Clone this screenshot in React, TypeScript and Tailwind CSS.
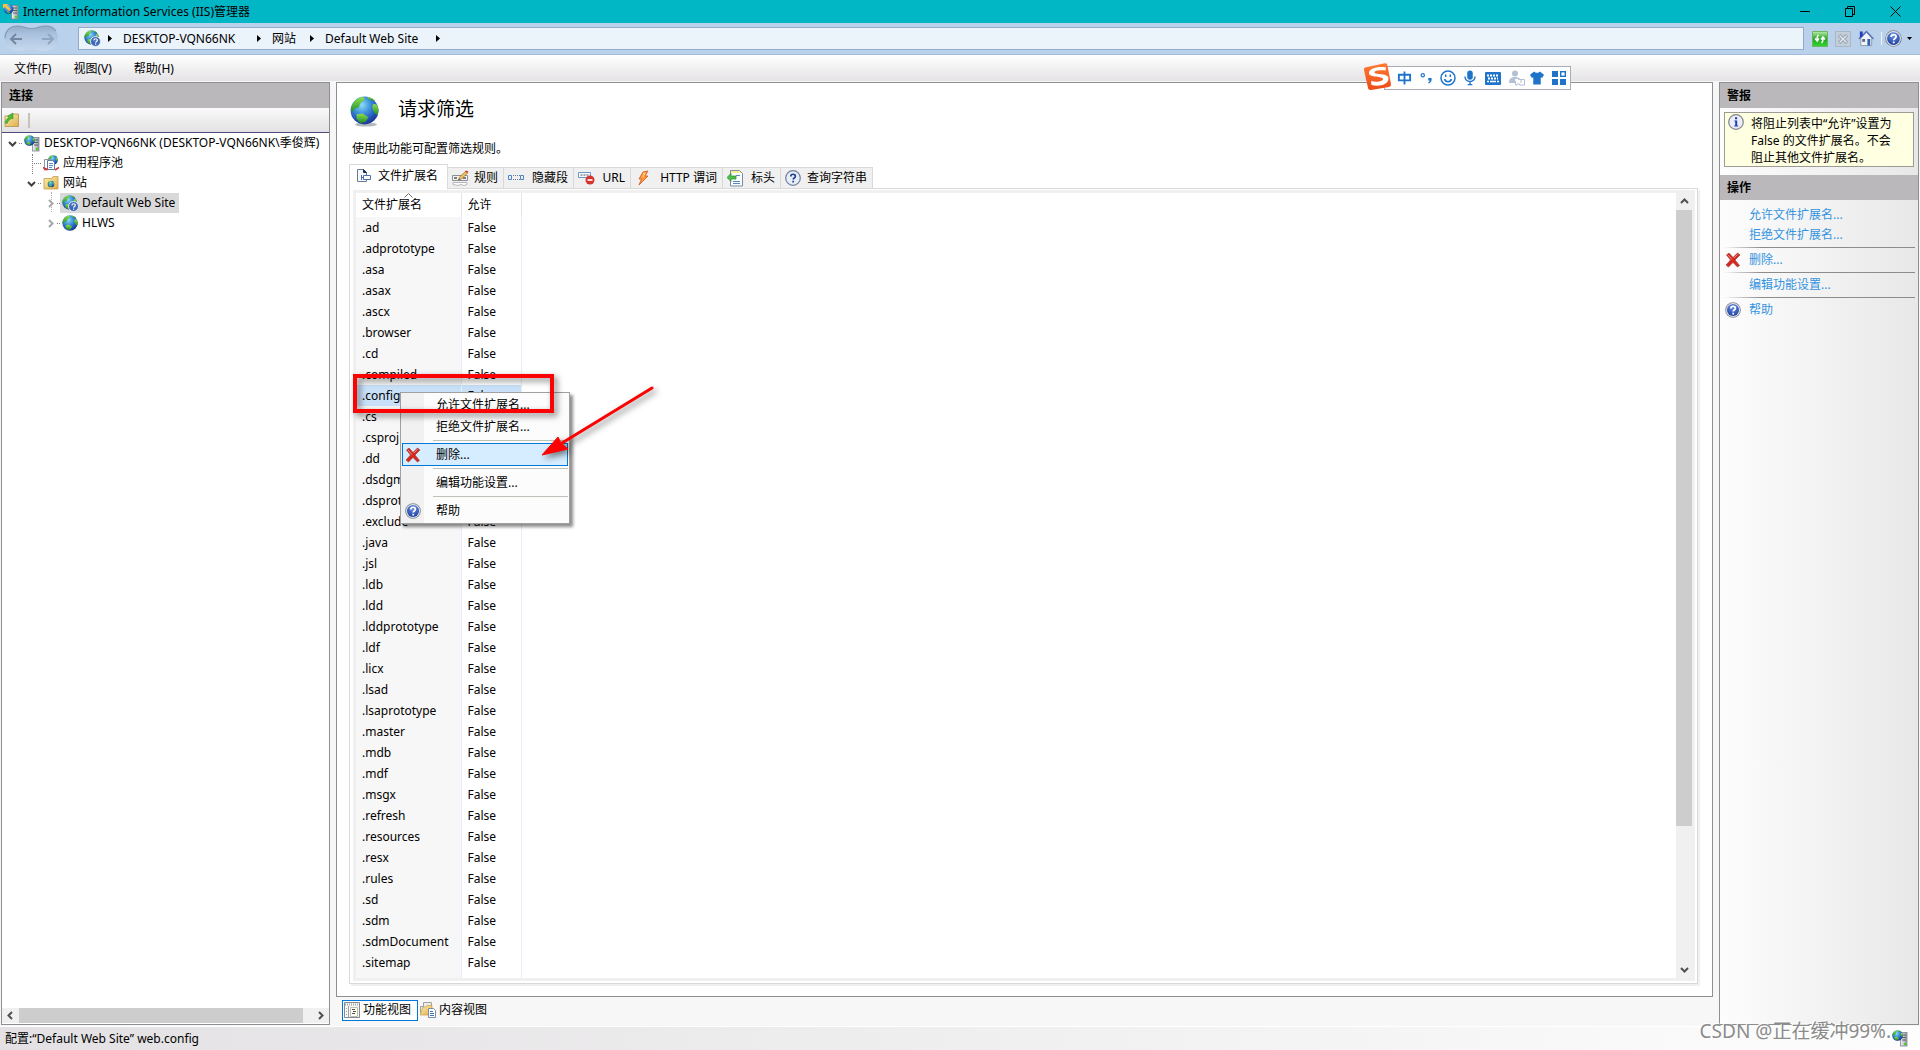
import React from "react";

const extensions = [
  ".ad", ".adprototype", ".asa", ".asax", ".ascx", ".browser", ".cd", ".compiled", ".config",
  ".cs", ".csproj", ".dd", ".dsdgm", ".dsprototype", ".exclude", ".java", ".jsl", ".ldb",
  ".ldd", ".lddprototype", ".ldf", ".licx", ".lsad", ".lsaprototype", ".master", ".mdb", ".mdf",
  ".msgx", ".refresh", ".resources", ".resx", ".rules", ".sd", ".sdm", ".sdmDocument", ".sitemap",
];

/* ---------- shared gradients ---------- */

function Gradients() {
  return (
    <svg className="absolute h-0 w-0" aria-hidden="true">
      <defs>
        <radialGradient id="sea" cx="0.4" cy="0.3" r="0.75">
          <stop offset="0" stopColor="#8fdcf5" />
          <stop offset="0.4" stopColor="#3f93dc" />
          <stop offset="0.8" stopColor="#1f49b0" />
          <stop offset="1" stopColor="#1a2f86" />
        </radialGradient>
        <linearGradient id="land" x1="0" y1="0" x2="0" y2="1">
          <stop offset="0" stopColor="#8ee04a" />
          <stop offset="1" stopColor="#1f8a2c" />
        </linearGradient>
        <linearGradient id="folder" x1="0" y1="0" x2="1" y2="1">
          <stop offset="0" stopColor="#fdf0b0" />
          <stop offset="1" stopColor="#e0ad4a" />
        </linearGradient>
        <linearGradient id="steel" x1="0" y1="0" x2="1" y2="0">
          <stop offset="0" stopColor="#f4f6f7" />
          <stop offset="1" stopColor="#8e979c" />
        </linearGradient>
        <radialGradient id="helpBlue" cx="0.5" cy="0.25" r="0.8">
          <stop offset="0" stopColor="#6f95e6" />
          <stop offset="1" stopColor="#173a9c" />
        </radialGradient>
        <linearGradient id="greenKey" x1="0" y1="0" x2="0" y2="1">
          <stop offset="0" stopColor="#b8ecab" />
          <stop offset="0.5" stopColor="#22a522" />
          <stop offset="1" stopColor="#35d72f" />
        </linearGradient>
        <linearGradient id="orange" x1="0" y1="0" x2="0" y2="1">
          <stop offset="0" stopColor="#ff7a33" />
          <stop offset="1" stopColor="#ee4a17" />
        </linearGradient>
        <linearGradient id="navPill" x1="0" y1="0" x2="0" y2="1">
          <stop offset="0" stopColor="#93abc8" />
          <stop offset="0.3" stopColor="#a9c0dc" />
          <stop offset="1" stopColor="#c6d9ee" />
        </linearGradient>
      </defs>
    </svg>
  );
}

/* ---------- icons ---------- */

function GlobeArt({ x = 0, y = 0, size = 16 }: { x?: number; y?: number; size?: number }) {
  return (
    <svg x={x} y={y} width={size} height={size} viewBox="0 0 30 30">
      <circle cx="15" cy="15" r="14.4" fill="url(#sea)" />
      <path d="M3 8 C6 3 10 1 14 1 L15 4 L11 7 L9 12 L5 13 L2 17 C0 14 1 11 3 8Z" fill="url(#land)" />
      <path d="M18 1 C21 1 24 3 26 5 L23 5 L20 4Z" fill="url(#land)" />
      <path d="M24 8 L28 9 C30 13 30 17 28 20 L25 17 L23 12Z" fill="url(#land)" />
      <path d="M7 19 L13 18 L19 22 L16 27 L11 28 C8 26 6 23 7 19Z" fill="url(#land)" />
    </svg>
  );
}

function Globe({ size = 16 }: { size?: number }) {
  return (
    <svg width={size} height={size} viewBox="0 0 16 16" className="shrink-0" aria-hidden="true">
      <GlobeArt />
    </svg>
  );
}

function SiteHelp() {
  return (
    <svg width="17" height="17" viewBox="0 0 17 17" className="shrink-0" aria-hidden="true">
      <GlobeArt size={15} />
      <circle cx="11.5" cy="11.5" r="5" fill="#3f68b8" stroke="#e6edf8" strokeWidth="1" />
      <path d="M9.9 10.4c0-2.2 3.4-2.2 3.4-.1 0 1.3-1.6 1.2-1.6 2.4M11.6 13.6v1.2" fill="none" stroke="#fff" strokeWidth="1.2" />
    </svg>
  );
}

function HelpBall({ size = 16 }: { size?: number }) {
  return (
    <svg width={size} height={size} viewBox="0 0 16 16" className="shrink-0" aria-hidden="true">
      <circle cx="8" cy="8" r="7.8" fill="#7d8290" />
      <circle cx="8" cy="8" r="7" fill="#dfe3ea" />
      <circle cx="8" cy="8" r="6" fill="url(#helpBlue)" />
      <path d="M5.8 6.5c0-3 4.6-2.9 4.6-.2 0 1.8-2.2 1.6-2.2 3.3M8.2 10.8v1.7" fill="none" stroke="#fff" strokeWidth="1.7" />
    </svg>
  );
}

function QueryBall() {
  return (
    <svg width="16" height="16" viewBox="0 0 16 16" className="shrink-0" aria-hidden="true">
      <circle cx="8" cy="8" r="7.3" fill="#e8eef8" stroke="#6f7f9c" strokeWidth="1.2" />
      <path d="M5.8 6.5c0-3 4.6-2.9 4.6-.2 0 1.8-2.2 1.6-2.2 3.3M8.2 10.8v1.7" fill="none" stroke="#1f3f94" strokeWidth="1.7" />
    </svg>
  );
}

function InfoBall() {
  return (
    <svg width="16" height="16" viewBox="0 0 16 16" className="shrink-0" aria-hidden="true">
      <circle cx="8" cy="8" r="7.3" fill="#eceef3" stroke="#80848e" strokeWidth="1.2" />
      <path d="M7 3.2h2.2v2H7zM6.3 6.4h2.9v5.2h1v1H6.2v-1h1V7.4h-.9z" fill="#1c3fc0" />
    </svg>
  );
}

function Server({ arrow = false }: { arrow?: boolean }) {
  return (
    <svg width="16" height="17" viewBox="0 0 16 17" className="shrink-0" aria-hidden="true">
      <rect x="8.5" y="2.5" width="6.5" height="13.5" fill="url(#steel)" stroke="#7f878c" strokeWidth="0.8" />
      <path d="M10 5h4M10 7.5h4M10 10h4" stroke="#4c5459" strokeWidth="0.9" />
      <rect x="12" y="13" width="2" height="2" fill="#3fd41f" />
      {arrow ? (
        <g>
          <circle cx="5.5" cy="6" r="5" fill="url(#sea)" />
          <path d="M0 1l5 0-1.5 1.5L8 6.5 6 8 2 4 0 5.5z" fill="#ffc02e" />
          <path d="M3 8l4 1-1 2z" fill="url(#land)" />
        </g>
      ) : (
        <GlobeArt size={11} />
      )}
    </svg>
  );
}

function AppPool() {
  return (
    <svg width="16" height="16" viewBox="0 0 16 16" className="shrink-0" aria-hidden="true">
      <GlobeArt x={5} y={0} size={10} />
      <path d="M1.5 4.5h6v9h-6z" fill="#fff" stroke="#8c97a3" />
      <path d="M4.5 5.5h5l2 2v7h-7z" fill="#fff" stroke="#5d7da4" />
      <path d="M6 8.5h4M6 10.5h4M6 12.5h3" stroke="#5d8cc4" />
      <path d="M0 12.5l3 1.5M16 12.5L12 15M1 14.5h4" stroke="#d33a33" strokeWidth="1.6" />
    </svg>
  );
}

function SitesFolder() {
  return (
    <svg width="16" height="16" viewBox="0 0 16 16" className="shrink-0" aria-hidden="true">
      <path d="M1 3.5h8l1-2h5v12.5H1z" fill="url(#folder)" stroke="#c79d45" strokeWidth="0.8" />
      <GlobeArt x={4.5} y={5.5} size={7} />
    </svg>
  );
}

function OpenFolder() {
  return (
    <svg width="16" height="16" viewBox="0 0 16 16" className="shrink-0" aria-hidden="true">
      <path d="M1 4h7l1-2h5.5v12.5H1z" fill="url(#folder)" stroke="#b8924a" strokeWidth="0.8" />
      <path d="M1 11c1-3 2-4.500 4-5.500L3.500 4 9 1v6L7.500 6.500C5.500 7.500 4 9 3 11.500z" fill="#4cbc35" stroke="#2a8a22" strokeWidth="0.5" />
    </svg>
  );
}

function RedCross() {
  return (
    <svg width="16" height="16" viewBox="0 0 16 16" className="shrink-0" aria-hidden="true">
      <path d="M1.5 3L4 1l4 4.500L12.500 1 15 3l-5 5 4.500 5.500L12.500 15 8 10.500 3.500 15 1 13l4.500-5z" fill="#d9261c" stroke="#9c4a46" strokeWidth="0.7" />
      <path d="M3 3l4 4.500M12.500 2.500L9 6" stroke="#f38b84" strokeWidth="1" />
    </svg>
  );
}

function TabExtIcon() {
  return (
    <svg width="16" height="16" viewBox="0 0 16 16" className="shrink-0" aria-hidden="true">
      <path d="M1.5 1.5h6l3 3v9h-9z" fill="#f6f8fb" stroke="#6d7a8d" />
      <path d="M7.5 1.5v3h3z" fill="#1d2f66" stroke="#1d2f66" />
      <path d="M5.5 7v5M5.5 9.5h2M7.5 7.5h7v4h-7z" fill="#fff" stroke="#4b6fae" />
    </svg>
  );
}

function TabRuleIcon() {
  return (
    <svg width="18" height="16" viewBox="0 0 18 16" className="shrink-0" aria-hidden="true">
      <path d="M.5 5.5h15v5H.5z" fill="#f1f2f4" stroke="#888e96" />
      <path d="M1 12.5h14v2l-3 1-3-1-3 1-5-1z" fill="#fff" stroke="#b3b7bd" />
      <path d="M2 8h3M11 8h3" stroke="#555" strokeWidth="1.5" />
      <path d="M6.500 10l1-3 6-5.500 2 1.500-6 6z" fill="#eec25f" stroke="#9a6a2c" strokeWidth="0.7" />
      <path d="M13 1.500L14 .5l2.500 1-1 1.500z" fill="#d23b32" />
      <path d="M6.500 10l.5-1.500 1 1z" fill="#333" />
    </svg>
  );
}

function TabSegIcon() {
  return (
    <svg width="16" height="16" viewBox="0 0 16 16" className="shrink-0" aria-hidden="true">
      <path d="M.5 5.5h3v4h-3zM12.500 5.500h3v4h-3z" fill="#e8f1fb" stroke="#4f85c2" />
      <path d="M5 5.500h7M5 9.500h7" stroke="#6b7788" strokeDasharray="1 1" />
    </svg>
  );
}

function TabUrlIcon() {
  return (
    <svg width="17" height="16" viewBox="0 0 17 16" className="shrink-0" aria-hidden="true">
      <path d="M.5 2.500h12v5H.5z" fill="#f5f9fd" stroke="#6a9acb" />
      <path d="M2.500 5h8" stroke="#555" strokeDasharray="2 1" />
      <circle cx="12" cy="10" r="4.500" fill="#d3342e" />
      <path d="M9.500 10h5" stroke="#fff" strokeWidth="1.600" />
    </svg>
  );
}

function TabVerbIcon() {
  return (
    <svg width="16" height="16" viewBox="0 0 16 16" className="shrink-0" aria-hidden="true">
      <path d="M8 2l5-1-3 5h3L4 15l2.500-6H4z" fill="#fb9a3c" stroke="#d9531e" strokeWidth="0.8" />
      <path d="M8 4l2-1-2 4" fill="none" stroke="#ffe48a" />
    </svg>
  );
}

function TabHeaderIcon() {
  return (
    <svg width="16" height="17" viewBox="0 0 16 17" className="shrink-0" aria-hidden="true">
      <path d="M3.500.5h9l3 3v12.500h-12z" fill="#fbfcfd" stroke="#7f8d9c" />
      <path d="M4 1h8l2 2H4z" fill="#f6f08a" />
      <path d="M6 11.500h7M6 13.500h7M9 5.500h4" stroke="#5b86bd" />
      <path d="M0 7.500l4-4v2.500h5v3H4v2.500z" fill="#4fc04a" stroke="#23872a" strokeWidth="0.7" />
    </svg>
  );
}

function FeaturesViewIcon() {
  return (
    <svg width="16" height="16" viewBox="0 0 16 16" className="shrink-0" aria-hidden="true">
      <path d="M.5.5h15v15H.5z" fill="#f7f7f5" stroke="#85888c" />
      <path d="M1 2.500h14" stroke="#a4a7ab" strokeWidth="2" strokeDasharray="1 1" />
      <path d="M4.500 4v11M2 6.500h1M2 9.500h1M2 12.500h1" stroke="#9b9ea2" />
      <path d="M6.500 5.500h7v9h-7z" fill="#fffef2" stroke="#bdbdb0" />
      <path d="M8 7.500h3M9 9.500h3M8 11.500h3" stroke="#4d4d45" />
    </svg>
  );
}

function ContentViewIcon() {
  return (
    <svg width="16" height="16" viewBox="0 0 16 16" className="shrink-0" aria-hidden="true">
      <path d="M.5 4.500h3v-4h8v10h-11z" fill="#ececec" stroke="#a0a0a0" />
      <path d="M0 13l3-8h3l1-1.500h5V13z" fill="url(#folder)" stroke="#c89d45" strokeWidth="0.7" />
      <path d="M8.500 6.500h5l2 2v7h-7z" fill="#fff" stroke="#7a8ca6" />
      <path d="M10 9.500h3M10 11.500h4M10 13.500h4" stroke="#3f74bd" />
    </svg>
  );
}

function Chevron({ dir, className = "" }: { dir: "up" | "down" | "left" | "right"; className?: string }) {
  const paths = {
    up: "M1 6l3.500-3.500L8 6",
    down: "M1 3l3.500 3.500L8 3",
    left: "M6 1L2.500 4.500 6 8",
    right: "M3 1l3.500 3.500L3 8",
  };
  return (
    <svg width="9" height="9" viewBox="0 0 9 9" className={className} aria-hidden="true">
      <path d={paths[dir]} fill="none" stroke="currentColor" strokeWidth="2" />
    </svg>
  );
}

/* ---------- top bars ---------- */

function TitleBar() {
  return (
    <header className="flex h-[23px] shrink-0 items-center bg-[#02b7c5] pl-[3px]">
      <Server arrow />
      <h1 className="ml-1 flex-1 leading-5">Internet Information Services (IIS)管理器</h1>
      <div className="flex h-full pr-[2px]">
        <button aria-label="最小化" className="flex w-[45px] items-center justify-center">
          <svg width="11" height="11" viewBox="0 0 11 11"><path d="M0 5.500h10" stroke="#000" /></svg>
        </button>
        <button aria-label="还原" className="flex w-[45px] items-center justify-center">
          <svg width="11" height="11" viewBox="0 0 11 11" fill="none" stroke="#000"><path d="M.5 2.500h7v8h-7zM2.500 2V.5h7v8H8" /></svg>
        </button>
        <button aria-label="关闭" className="flex w-[45px] items-center justify-center">
          <svg width="11" height="11" viewBox="0 0 11 11" stroke="#000"><path d="M.5.5l10 10M10.500.5l-10 10" /></svg>
        </button>
      </div>
    </header>
  );
}

function Crumb() {
  return (
    <svg width="5" height="7" viewBox="0 0 5 7" className="shrink-0" aria-hidden="true">
      <path d="M0 0l4 3.500L0 7z" />
    </svg>
  );
}

function AddressBar() {
  return (
    <div className="flex h-8 shrink-0 items-center border-b border-[#a1bbd9] bg-[#b9d1ea] pl-1">
      <div className="flex w-[74px]">
        <svg width="55" height="27" viewBox="0 0 55 27" aria-hidden="true">
          <path d="M13 1c7 0 8 2.500 14.500 2.500S35 1 42 1c7 0 12 5 12 12.500S49 26 42 26c-7 0-9-1.500-14.500-1.500S20 26 13 26C6 26 1 21 1 13.500S6 1 13 1z" fill="url(#navPill)" />
          <path d="M1 13.500C1 6 6 1 13 1c7 0 8 2.500 14.500 2.500S35 1 42 1c5 0 8 2 10 5" fill="none" stroke="#8099b8" strokeWidth="1.200" />
          <path d="M18 14H7M12 9l-5 5 5 5" fill="none" stroke="#7488a2" strokeWidth="2" />
          <path d="M38 14h11M44 9l5 5-5 5" fill="none" stroke="#8fa5c0" strokeWidth="2" />
        </svg>
      </div>
      <nav aria-label="地址" className="flex h-[23px] flex-1 items-center border border-[#93abc7] bg-[#ebf3fb] pl-[5px]">
        <SiteHelp />
        <span className="ml-[7px] flex items-center gap-[10px]">
          <Crumb />
          <a href="#server" className="min-w-[124px]">DESKTOP-VQN66NK</a>
          <Crumb />
          <a href="#sites" className="min-w-7">网站</a>
          <Crumb />
          <a href="#default" className="min-w-[101px]">Default Web Site</a>
          <Crumb />
        </span>
      </nav>
      <div className="ml-2 flex items-center gap-[7px] pr-2">
        <button aria-label="刷新">
          <svg width="16" height="16" viewBox="0 0 16 16">
            <path d="M.5.500h15v15H.5z" fill="url(#greenKey)" stroke="#6cb565" />
            <path d="M6.500 4C5 5 5 6.500 5 9M3 7.500l2.200 2.500L7 7.500M9.500 12c1.500-1 1.500-2.500 1.500-5M9 8.500L11 6l2 2.500" fill="none" stroke="#fff" strokeWidth="1.500" />
          </svg>
        </button>
        <button aria-label="停止" disabled>
          <svg width="16" height="16" viewBox="0 0 16 16">
            <path d="M.5.500h15v15H.5z" fill="#c3cedb" stroke="#a9b6c4" />
            <path d="M4 4l8 8M12 4l-8 8" stroke="#98a3b0" strokeWidth="3.500" />
            <path d="M4.500 4.500l7 7M11.500 4.500l-7 7" stroke="#dfe5ec" strokeWidth="1.500" />
          </svg>
        </button>
        <button aria-label="主页">
          <svg width="16" height="17" viewBox="0 0 17 17">
            <path d="M3 8l6-6 5.500 6v8H3z" fill="#f2f4f7" stroke="#7d8aa0" strokeWidth="0.8" />
            <path d="M1 9l8-8 7.500 8" fill="none" stroke="#5673b9" strokeWidth="1.400" />
            <path d="M2 1h3v5L2 8z" fill="#243ec0" />
            <path d="M4.500 9h3v3h-3z" fill="#5c6b85" />
            <path d="M10 9h3v7h-3z" fill="#2d62b0" />
          </svg>
        </button>
        <span className="flex items-center gap-[3px]">
          <span className="h-[13px] w-px bg-[#eef4fb]" />
          <button aria-label="帮助" className="flex items-center gap-[5px]">
            <HelpBall size={17} />
            <svg width="5" height="3" viewBox="0 0 5 3"><path d="M0 0h5L2.500 3z" /></svg>
          </button>
        </span>
      </div>
    </div>
  );
}

function MenuBar() {
  return (
    <nav aria-label="菜单" className="flex h-[26px] shrink-0 items-center gap-[22px] bg-linear-to-b from-white to-[#e5e3e5] pt-px pl-[14px]">
      <button>文件(F)</button>
      <button>视图(V)</button>
      <button>帮助(H)</button>
    </nav>
  );
}

/* ---------- left pane ---------- */

function TreeRow({ indent, state, icon, label, selected = false }: {
  indent: string; state: "open" | "closed" | "none"; icon: React.ReactNode; label: string; selected?: boolean;
}) {
  return (
    <li className={`flex h-5 items-center whitespace-nowrap ${indent}`}>
      {state === "none" ? (
        <span className="ml-[6px] w-[9px] border-t border-dotted border-[#808080]" />
      ) : (
        <>
          <span className="flex w-[10px] justify-center">
            <Chevron dir={state === "open" ? "down" : "right"} className={state === "open" ? "text-[#404040]" : "text-[#a6a6a6]"} />
          </span>
          <span className="ml-[2px] w-[3px] border-t border-dotted border-[#808080]" />
        </>
      )}
      <span className={`flex h-5 items-center gap-[3px] pr-1 pl-px ${selected ? "bg-[#d9d9d9]" : ""}`}>
        <span className="flex w-[18px] justify-center">{icon}</span>
        {label}
      </span>
    </li>
  );
}

function PaneTitle({ children }: { children: React.ReactNode }) {
  return <h2 className="flex h-[25px] shrink-0 items-center bg-[#bab8ba] pl-[7px] font-bold">{children}</h2>;
}

function ConnectionsPane() {
  return (
    <aside className="flex w-[329px] shrink-0 flex-col border border-[#8e8f8f] bg-white">
      <PaneTitle>连接</PaneTitle>
      <div className="flex h-[25px] shrink-0 items-center gap-2 border-b border-[#4c4c7c] bg-linear-to-b from-[#fafafa] to-[#e3e1e3] pl-[2px]">
        <button aria-label="连接"><OpenFolder /></button>
        <span className="h-[15px] w-[2px] bg-[#c5c2b8]" />
      </div>
      <ul className="relative flex-1 overflow-hidden">
        <li aria-hidden="true" className="absolute top-[21px] left-[30px] h-5 border-l border-dotted border-[#808080]" />
        <li aria-hidden="true" className="absolute top-[59px] left-[49px] h-5 border-l border-dotted border-[#b0b0b0]" />
        <TreeRow indent="pl-[5px]" state="open" icon={<Server />} label="DESKTOP-VQN66NK (DESKTOP-VQN66NK\季俊辉)" />
        <TreeRow indent="pl-6" state="none" icon={<AppPool />} label="应用程序池" />
        <TreeRow indent="pl-6" state="open" icon={<SitesFolder />} label="网站" />
        <TreeRow indent="pl-[43px]" state="closed" icon={<SiteHelp />} label="Default Web Site" selected />
        <TreeRow indent="pl-[43px]" state="closed" icon={<Globe />} label="HLWS" />
      </ul>
      <div className="mb-px flex h-[15px] shrink-0 items-center bg-[#f0f0f0] text-[#505050]">
        <span className="flex w-[17px] justify-center"><Chevron dir="left" /></span>
        <span className="flex h-full flex-1"><span className="h-full w-[97%] bg-[#cdcdcd]" /></span>
        <span className="flex w-[17px] justify-center"><Chevron dir="right" /></span>
      </div>
    </aside>
  );
}

/* ---------- centre pane ---------- */

const tabs = [
  { label: "规则", icon: <TabRuleIcon />, width: "w-14" },
  { label: "隐藏段", icon: <TabSegIcon />, width: "w-[70px]" },
  { label: "URL", icon: <TabUrlIcon />, width: "w-[57px]" },
  { label: "HTTP 谓词", icon: <TabVerbIcon />, width: "w-[92px]" },
  { label: "标头", icon: <TabHeaderIcon />, width: "w-[58px]" },
  { label: "查询字符串", icon: <QueryBall />, width: "w-[92px]" },
];

function ContextMenu() {
  return (
    <div role="menu" className="absolute top-[199px] left-[44px] w-[170px] border border-[#a0a0a0] bg-[#fcfcfc] bg-linear-to-r from-[#f1f1f1] from-[23px] to-[#fcfcfc] to-[23px] p-px shadow-[3px_3px_3px_rgba(0,0,0,0.45)]">
      <button role="menuitem" className="flex h-[22px] w-full items-center pl-[34px]">允许文件扩展名...</button>
      <button role="menuitem" className="flex h-[22px] w-full items-center pl-[34px]">拒绝文件扩展名...</button>
      <hr className="my-[2px] ml-[31px] border-[#bfc2b8]" />
      <button role="menuitem" className="flex h-[23px] w-full items-center gap-[15px] border border-[#0078d7] bg-[#d6ecff] pl-[2px]"><RedCross />删除...</button>
      <hr className="my-[2px] ml-[31px] border-[#bfc2b8]" />
      <button role="menuitem" className="flex h-[23px] w-full items-center pl-[34px]">编辑功能设置...</button>
      <hr className="my-[2px] ml-[31px] border-[#bfc2b8]" />
      <button role="menuitem" className="flex h-[23px] w-full items-center gap-[15px] pl-[3px]"><HelpBall />帮助</button>
    </div>
  );
}

function Annotation() {
  return (
    <svg width="320" height="110" viewBox="0 0 320 110" className="pointer-events-none absolute top-[175px] -left-[7px] drop-shadow-[3px_3px_3px_rgba(0,0,0,0.5)]" aria-hidden="true">
      <rect x="6" y="8" width="197" height="35" fill="none" stroke="#fc0303" strokeWidth="4" />
      <path d="M303 20L213 75" stroke="#fc0303" strokeWidth="3" strokeLinecap="round" />
      <path d="M193 87L209 69L212 75L219 81Z" fill="#fc0303" stroke="#fc0303" />
    </svg>
  );
}

function FeaturePane() {
  return (
    <main className="flex min-h-0 flex-1 flex-col border border-[#8e8f8f] bg-white pt-3 pr-[14px] pb-3 pl-3">
      <div className="flex h-8 shrink-0 items-center gap-[18px]">
        <svg width="31" height="32" viewBox="0 0 31 32" aria-hidden="true">
          <ellipse cx="17" cy="29.5" rx="11" ry="2" fill="#b5b9bd" />
          <GlobeArt x={1} y={1} size={29} />
        </svg>
        <h2 className="-mt-[4px] text-[19px] leading-6">请求筛选</h2>
      </div>
      <p className="mt-[14px] ml-[3px] h-4 shrink-0 leading-4">使用此功能可配置筛选规则。</p>
      <div role="tablist" className="mt-[6px] flex h-[25px] shrink-0 items-end">
        <button role="tab" aria-selected="true" className="z-10 -mb-px flex h-[25px] w-[99px] items-center gap-[6px] border border-b-0 border-[#d9d9d9] bg-white pb-[2px] pl-[6px]">
          <TabExtIcon />文件扩展名
        </button>
        {tabs.map((t) => (
          <button key={t.label} role="tab" className={`flex h-[21px] items-center justify-between border-t border-r border-[#d9d9d9] bg-[#f0f0f0] pr-[5px] pl-1 ${t.width}`}>
            {t.icon}{t.label}
          </button>
        ))}
      </div>
      <div className="flex min-h-0 flex-1 border border-[#d9d9d9] px-[2px] pt-px pb-[2px] pl-[3px] shadow-[2px_2px_0_#f0f0f0]">
        <div className="flex min-h-0 flex-1 border-3 border-[#f0f0f0]">
          <div className="relative min-w-0 flex-1">
            <div className="absolute inset-0 overflow-hidden">
              <table className="h-full table-fixed border-collapse text-left">
                <thead>
                  <tr className="h-6">
                    <th className="relative w-[105px] border-r border-[#e5e5e5] pl-[6px] font-normal">
                      <svg width="9" height="5" viewBox="0 0 9 5" className="absolute top-0 left-12" aria-hidden="true">
                        <path d="M.5 4.500l4-4 4 4" fill="none" stroke="#707070" />
                      </svg>
                      文件扩展名
                    </th>
                    <th className="w-[60px] border-r border-[#e5e5e5] pl-[6px] font-normal">允许</th>
                  </tr>
                </thead>
                <tbody>
                  {extensions.map((ext) => (
                    <tr key={ext} className={`h-[21px] leading-5 ${ext === ".config" ? "bg-[#c8e1f8]" : "bg-linear-to-r from-[#f7f7f7] from-[105px] to-white to-[105px]"}`}>
                      <td className="border-r border-[#e5eefb] pl-[6px]">{ext}</td>
                      <td className="border-r border-[#e5eefb] pl-[6px]">False</td>
                    </tr>
                  ))}
                  <tr className="bg-linear-to-r from-[#f7f7f7] from-[105px] to-white to-[105px]">
                    <td className="border-r border-[#e5eefb]" />
                    <td className="border-r border-[#e5eefb]" />
                  </tr>
                </tbody>
              </table>
            </div>
            <ContextMenu />
            <Annotation />
          </div>
          <div className="flex w-[16px] shrink-0 flex-col items-center bg-[#f0f0f0] text-[#505050]">
            <span className="flex h-[17px] items-center"><Chevron dir="up" /></span>
            <span className="w-full flex-1"><span className="block h-[82%] w-full bg-[#cdcdcd]" /></span>
            <span className="flex h-[17px] items-center"><Chevron dir="down" /></span>
          </div>
        </div>
      </div>
    </main>
  );
}

/* ---------- right pane ---------- */

function ActionRow({ icon, label }: { icon?: React.ReactNode; label: string }) {
  return (
    <li className="flex h-5 items-center gap-2">
      <span className="w-4">{icon}</span>
      <a href="#action" className="text-[#3393df]">{label}</a>
    </li>
  );
}

function Fade() {
  return <li aria-hidden="true" className="my-[2px] mr-[3px] -ml-[2px] h-px bg-linear-to-r from-transparent via-[#8c8c8c] via-20% to-[#8c8c8c]" />;
}

function ActionsPane() {
  return (
    <aside className="w-[200px] shrink-0 border border-[#8e8f8f] bg-linear-to-r from-[#fdfdfd] to-[#e9e8e9]">
      <PaneTitle>警报</PaneTitle>
      <div className="mx-1 mt-1 mb-2 flex h-[55px] gap-[7px] border border-[#9c9c94] bg-[#ffffe1] pt-px pl-[3px]">
        <InfoBall />
        <p className="w-[144px] pt-px leading-[17px] whitespace-nowrap">将阻止列表中“允许”设置为<br />False 的文件扩展名。不会<br />阻止其他文件扩展名。</p>
      </div>
      <PaneTitle>操作</PaneTitle>
      <ul className="pt-[5px] pl-[5px]">
        <ActionRow label="允许文件扩展名..." />
        <ActionRow label="拒绝文件扩展名..." />
        <Fade />
        <ActionRow icon={<RedCross />} label="删除..." />
        <Fade />
        <ActionRow label="编辑功能设置..." />
        <Fade />
        <ActionRow icon={<HelpBall />} label="帮助" />
      </ul>
    </aside>
  );
}

/* ---------- input method bar ---------- */

function ImeBar() {
  return (
    <div className="absolute top-[63px] right-[349px] flex h-[28px] items-center">
      <svg width="30" height="30" viewBox="0 0 30 30" className="z-10 -mr-[9px]" aria-hidden="true">
        <path d="M2 5.500L22 1.200q2-.3 2.400 1.800L28 22q.2 2.500-2 3L8 28q-2.500.5-3-2L1 8q-.3-2 1-2.500z" fill="url(#orange)" />
        <path d="M23 5.500C14 4 5.500 7 6 11.500c.5 4 14 2.500 14 5.500 0 2.500-6 3.500-12 2l.5 4c8 2 17-.5 17-6.500 0-6-14-3.500-14-6 0-2 5-2.500 11-2z" fill="#fff" />
      </svg>
      <div className="mt-[2px] flex h-[24px] w-[187px] items-center justify-between border border-[#a9acb3] bg-white pr-1 pl-[12px] text-[#1f74c9]">
        <svg width="15" height="16" viewBox="0 0 16 16" fill="none" stroke="currentColor" strokeWidth="2" aria-hidden="true">
          <path d="M2 4.500h12v6H2zM8 1v14" />
        </svg>
        <svg width="12" height="16" viewBox="0 0 13 16" aria-hidden="true">
          <circle cx="3" cy="5" r="1.800" fill="none" stroke="currentColor" strokeWidth="1.300" />
          <path d="M9 8h3.500c.5 3-.5 5-3.500 6v-1.500c1-.5 1.500-1 1.500-1.800H9z" fill="currentColor" />
        </svg>
        <svg width="16" height="16" viewBox="0 0 16 16" fill="none" stroke="currentColor" strokeWidth="1.500" aria-hidden="true">
          <circle cx="8" cy="8" r="7" /><path d="M4.500 9c1 3.500 6 3.500 7 0M5.700 4.500v2.500M10.300 4.500v2.500" />
        </svg>
        <svg width="12" height="16" viewBox="0 0 13 16" aria-hidden="true">
          <rect x="3.500" y="0" width="6" height="10" rx="3" fill="currentColor" />
          <path d="M1 6.500c0 7 11 7 11 0M6.500 12v3M4 15.200h5" fill="none" stroke="currentColor" strokeWidth="1.500" />
        </svg>
        <svg width="16" height="13" viewBox="0 0 16 13" aria-hidden="true">
          <rect width="16" height="13" rx="1" fill="currentColor" />
          <path d="M2 3.500h12M3 6.500h10" stroke="#fff" strokeWidth="2" strokeDasharray="2 1" />
          <path d="M2 9.500h2M5 9.500h6M12 9.500h2" stroke="#fff" strokeWidth="1.500" />
        </svg>
        <svg width="16" height="16" viewBox="0 0 16 16" className="text-[#b5bfd6]" aria-hidden="true">
          <circle cx="6" cy="3.500" r="3" fill="currentColor" />
          <path d="M0 13c0-4 2-6 6-6 3 0 4 1 5 2v4z" fill="currentColor" />
          <path d="M5.500 8.500h4v1h6V15h-5v-1H8v1H6.500v-4h-1z" fill="#fff" stroke="currentColor" />
          <path d="M12 10v3" stroke="currentColor" />
        </svg>
        <svg width="14" height="14" viewBox="0 0 15 14" className="-ml-[3px]" aria-hidden="true">
          <path d="M0 3.500L4.500 0c1 2 5 2 6 0L15 3.500 13 7l-1.500-.7V14h-8V6.300L2 7z" fill="currentColor" />
        </svg>
        <svg width="14" height="14" viewBox="0 0 14 14" aria-hidden="true">
          <path d="M0 0h6v6H0zM0 8h6v6H0zM8 8h6v6H8z" fill="currentColor" />
          <rect x="8.700" y=".7" width="4.600" height="4.600" fill="none" stroke="currentColor" strokeWidth="1.400" />
        </svg>
      </div>
    </div>
  );
}

export default function App() {
  return (
    <div className="relative flex h-screen flex-col overflow-hidden bg-[#f7f7f7] font-['Noto_Sans','Noto_Sans_CJK_SC',sans-serif] text-xs text-black">
      <Gradients />
      <TitleBar />
      <AddressBar />
      <MenuBar />
      <div className="flex min-h-0 flex-1 gap-[6px] p-px">
        <ConnectionsPane />
        <div className="flex min-w-0 flex-1 flex-col">
          <FeaturePane />
          <div className="flex h-7 shrink-0 items-center gap-[2px] pb-[2px] pl-[6px]">
            <button className="flex h-[21px] items-center gap-[3px] border border-[#0078d7] bg-white pr-[6px] pl-px"><FeaturesViewIcon />功能视图</button>
            <button className="flex h-[21px] items-center gap-[3px]"><ContentViewIcon />内容视图</button>
          </div>
        </div>
        <ActionsPane />
      </div>
      <footer className="flex h-6 shrink-0 items-center justify-between border-t border-white bg-linear-to-r from-[#e3e1e3] to-[#fdfdfd] pr-3 pl-[5px]">
        <p>配置:“Default Web Site” web.config</p>
        <Server />
      </footer>
      <p className="absolute right-[29px] bottom-[7px] text-[19px] leading-6 text-[#8b8b8b] [text-shadow:-1px_-1px_0_#fff]">CSDN @正在缓冲99%.</p>
      <ImeBar />
    </div>
  );
}
